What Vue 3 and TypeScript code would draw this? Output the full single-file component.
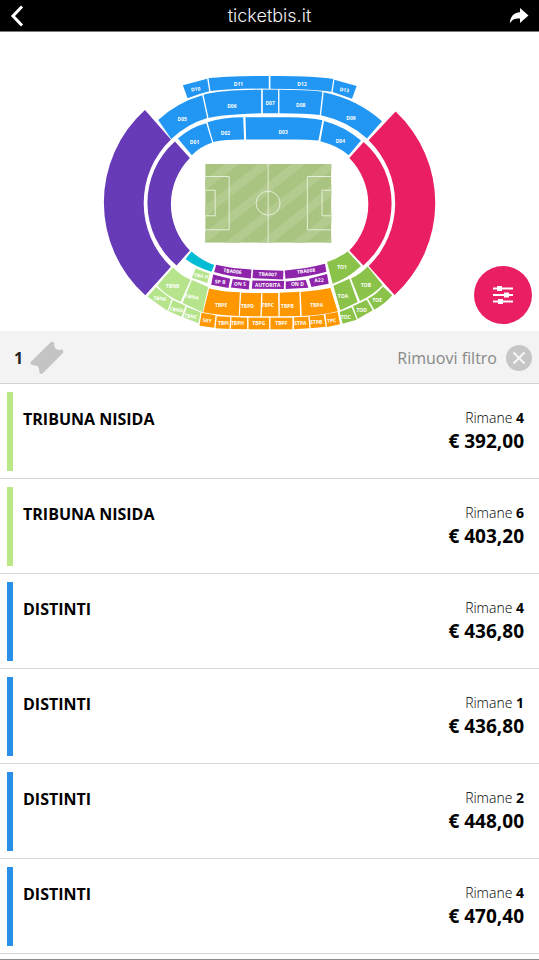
<script setup lang="ts">
interface Zone {
  d: string
  fill: string
  label?: string
  x?: number
  y?: number
  turn?: number
}

interface Offer {
  id: number
  sector: string
  left: number
  price: string
  tone: 'lime' | 'blue'
}

const VIOLET = '#673ab7'
const PINK = '#e91e63'
const BLUE = '#2196f3'
const PURPLE = '#8e24aa'
const ORANGE = '#ff9800'
const LIME = '#b5e48c'
const GREEN = '#8bc34a'
const CYAN = '#00bcd4'

const zones: Zone[] = [
  { fill: VIOLET, d: 'M135 120 L213 209 A264 264 0 0 0 213 591 L136 677 A375 375 0 0 1 135 120Z' },
  { fill: VIOLET, d: 'M225 215 L270 264 A198 198 0 0 0 270 542 L230 587 A246 246 0 0 1 225 215Z' },
  { fill: PINK, d: 'M888 125 L807 211 A264 264 0 0 1 807 589 L885 676 A375 375 0 0 0 888 125Z' },
  { fill: PINK, d: 'M792 216 L749 264 A198 198 0 0 1 749 542 L791 587 A246 246 0 0 0 792 216Z' },

  { fill: BLUE, label: 'D10', x: 287, y: 57, turn: -8, d: 'M249 46 L322 26 L328 64 Q295 72 263 85Z' },
  { fill: BLUE, label: 'D11', x: 416, y: 42, d: 'M326 25 Q380 18 507 18 L507 56 Q400 55 332 63Z' },
  { fill: BLUE, label: 'D12', x: 607, y: 42, d: 'M512 18 Q640 17 701 27 L695 65 Q630 56 512 56Z' },
  { fill: BLUE, label: 'D13', x: 734, y: 59, turn: 8, d: 'M704 29 L771 48 L757 86 L699 66Z' },
  { fill: BLUE, label: 'D05', x: 247, y: 147, d: 'M175 150 Q232 98 307 76 L322 144 Q260 163 214 207Z' },
  { fill: BLUE, label: 'D06', x: 396, y: 108, d: 'M311 74 Q365 59 484 59 L484 130 Q365 133 326 144Z' },
  { fill: BLUE, label: 'D07', x: 511, y: 100, d: 'M489 59 H535 V130 H489Z' },
  { fill: BLUE, label: 'D08', x: 603, y: 104, d: 'M539 59 Q620 59 668 65 L660 135 Q620 130 539 130Z' },
  { fill: BLUE, label: 'D09', x: 754, y: 143, d: 'M672 67 Q775 89 847 154 L802 206 Q745 154 664 136Z' },
  { fill: BLUE, label: 'D01', x: 284, y: 216, d: 'M234 206 Q272 172 319 160 L337 218 Q298 232 276 256Z' },
  { fill: BLUE, label: 'D02', x: 377, y: 188, d: 'M323 157 Q370 142 430 142 L433 209 Q375 209 340 216Z' },
  { fill: BLUE, label: 'D03', x: 550, y: 186, d: 'M437 142 H570 Q630 143 668 151 L656 212 Q620 209 590 209 H439Z' },
  { fill: BLUE, label: 'D04', x: 722, y: 212, d: 'M673 153 Q735 169 784 212 L747 256 Q715 228 662 214Z' },

  { fill: CYAN, d: 'M275 545 Q306 573 343 586 L335 606 Q290 594 257 568Z' },
  { fill: LIME, label: 'TBA H', x: 304, y: 618, turn: 8, d: 'M287 596 L330 612 L322 640 L276 624Z' },
  { fill: LIME, label: 'TBNB', x: 218, y: 648, d: 'M219 593 Q243 617 272 630 L242 696 Q202 680 172 648Z' },
  { fill: LIME, label: 'TBNA', x: 276, y: 681, turn: 8, d: 'M276 631 L325 652 L308 728 L248 700Z' },
  { fill: LIME, label: 'TBNE', x: 180, y: 686, turn: 6, d: 'M168 652 L215 689 L202 723 L143 681Z' },
  { fill: LIME, label: 'TBND', x: 230, y: 720, turn: 8, d: 'M219 691 L257 708 L245 741 L205 724Z' },
  { fill: LIME, label: 'TBNC', x: 273, y: 739, turn: 8, d: 'M261 711 L302 728 L296 761 L250 743Z' },

  { fill: PURPLE, label: 'TBA006', x: 398, y: 604, turn: 6, d: 'M349 585 Q400 597 455 599 L453 626 Q390 621 343 607Z' },
  { fill: PURPLE, label: 'TBA007', x: 504, y: 613, turn: 2, d: 'M460 600 L551 603 L550 629 L458 625Z' },
  { fill: PURPLE, label: 'TBA008', x: 619, y: 603, turn: -6, d: 'M555 602 Q620 597 676 582 L680 606 Q620 623 557 627Z' },
  { fill: PURPLE, label: 'SP B', x: 361, y: 636, turn: 4, d: 'M340 614 L391 627 L386 655 L334 645Z' },
  { fill: PURPLE, label: 'ON S', x: 420, y: 642, turn: 3, d: 'M399 628 L449 633 L447 659 L393 653Z' },
  { fill: PURPLE, label: 'AUTORITA', x: 504, y: 646, d: 'M458 632 L553 634 L552 658 L456 657Z' },
  { fill: PURPLE, label: 'ON D', x: 593, y: 642, d: 'M558 635 L618 631 L626 654 L558 658Z' },
  { fill: PURPLE, label: 'A22', x: 658, y: 631, turn: -4, d: 'M628 627 L682 613 L687 642 L635 652Z' },

  { fill: ORANGE, label: 'TBPE', x: 364, y: 705, d: 'M328 656 Q370 667 420 668 L417 739 Q360 738 310 728Z' },
  { fill: ORANGE, label: 'TBPD', x: 443, y: 708, d: 'M424 669 L484 670 L482 740 L420 739Z' },
  { fill: ORANGE, label: 'TBPC', x: 504, y: 705, d: 'M488 670 H535 L536 740 H486Z' },
  { fill: ORANGE, label: 'TBPB', x: 563, y: 708, d: 'M540 669 L599 666 L601 739 L540 740Z' },
  { fill: ORANGE, label: 'TBPA', x: 651, y: 705, d: 'M603 667 Q650 664 692 655 L714 725 Q660 738 606 739Z' },
  { fill: ORANGE, label: 'SKY', x: 322, y: 752, turn: 3, d: 'M305 729 L347 737 L343 774 L299 768Z' },
  { fill: ORANGE, label: 'TBPI', x: 371, y: 760, d: 'M351 740 L391 742 L389 778 L347 776Z' },
  { fill: ORANGE, label: 'TBPH', x: 413, y: 760, d: 'M395 742 L442 744 V779 L393 778Z' },
  { fill: ORANGE, label: 'TBPG', x: 477, y: 761, d: 'M446 744 H508 V779 H446Z' },
  { fill: ORANGE, label: 'TBPF', x: 545, y: 761, d: 'M512 744 H578 V779 H512Z' },
  { fill: ORANGE, label: 'STPA', x: 602, y: 760, d: 'M583 743 L626 741 L629 776 L583 779Z' },
  { fill: ORANGE, label: 'STPB', x: 650, y: 758, d: 'M630 740 L672 735 L678 771 L633 776Z' },
  { fill: ORANGE, label: 'TPC', x: 696, y: 752, turn: -5, d: 'M677 734 L714 727 L721 764 L682 772Z' },

  { fill: GREEN, label: 'TO1', x: 727, y: 593, d: 'M682 577 Q716 566 744 545 L784 589 Q745 626 699 642Z' },
  { fill: GREEN, label: 'TOA', x: 730, y: 679, d: 'M701 648 L749 627 L774 697 L722 722Z' },
  { fill: GREEN, label: 'TOB', x: 799, y: 646, d: 'M754 626 Q784 612 804 590 L849 646 Q820 676 781 694Z' },
  { fill: GREEN, label: 'TOE', x: 833, y: 690, d: 'M850 650 L878 677 Q855 704 824 720 L805 687 Q830 674 850 650Z' },
  { fill: GREEN, label: 'TOD', x: 786, y: 721, d: 'M801 690 L819 722 L774 748 L760 710Z' },
  { fill: GREEN, label: 'TOC', x: 738, y: 742, d: 'M756 713 L771 750 L729 762 L720 727Z' },
]

const stripes: number[] = [-340, -240, -140, -40, 60, 160, 260, 360]

const offers: Offer[] = [
  { id: 1, sector: 'TRIBUNA NISIDA', left: 4, price: '€ 392,00', tone: 'lime' },
  { id: 2, sector: 'TRIBUNA NISIDA', left: 6, price: '€ 403,20', tone: 'lime' },
  { id: 3, sector: 'DISTINTI', left: 4, price: '€ 436,80', tone: 'blue' },
  { id: 4, sector: 'DISTINTI', left: 1, price: '€ 436,80', tone: 'blue' },
  { id: 5, sector: 'DISTINTI', left: 2, price: '€ 448,00', tone: 'blue' },
  { id: 6, sector: 'DISTINTI', left: 4, price: '€ 470,40', tone: 'blue' },
]
</script>

<template>
  <div class="page">
    <header class="topbar">
      <button type="button" class="bar-button" aria-label="Indietro">
        <svg width="14" height="22" viewBox="0 0 14 22" aria-hidden="true">
          <path d="M12 1.500 L3 11 L12 20.500" fill="none" stroke="#fff" stroke-width="3" />
        </svg>
      </button>
      <h1 class="site">ticketbis.it</h1>
      <button type="button" class="bar-button" aria-label="Condividi">
        <svg width="20" height="18" viewBox="0 0 20 18" aria-hidden="true">
          <path d="M11 1 L19.500 8.500 L11 16 V11.500 C6 11.300 3 12.500 .8 16.500 C1 10 4.500 5.500 11 5.200Z" fill="#fff" />
        </svg>
      </button>
    </header>

    <main>
      <section class="map">
        <svg class="stadium" viewBox="0 0 1020 783" aria-hidden="true">
          <defs>
            <clipPath id="pitch">
              <rect x="316" y="282" width="379" height="237" />
            </clipPath>
          </defs>
          <path v-for="(zone, i) in zones" :key="i" :d="zone.d" :fill="zone.fill" />
          <g clip-path="url(#pitch)">
            <rect x="316" y="282" width="379" height="237" fill="#a9c480" />
            <path
              v-for="offset in stripes"
              :key="offset"
              :d="`M${316 + offset} 519 l300 -237 h42 l-300 237Z`"
              fill="#b3cb8f"
            />
          </g>
          <g fill="none" stroke="#e6efd9" stroke-width="3">
            <path d="M505 282 V519" />
            <circle cx="505" cy="400" r="36" />
            <path d="M316 320 H388 V480 H316 M316 361 H346 V438 H316" />
            <path d="M695 320 H623 V480 H695 M695 361 H667 V438 H695" />
          </g>
          <template v-for="(zone, i) in zones" :key="'label' + i">
            <text
              v-if="zone.label"
              class="zone-label"
              :x="zone.x"
              :y="zone.y"
              :transform="`rotate(${zone.turn ?? 0} ${zone.x} ${zone.y})`"
            >{{ zone.label }}</text>
          </template>
        </svg>
        <button type="button" class="filter-button" aria-label="Filtri">
          <svg width="22" height="20" viewBox="0 0 22 20" aria-hidden="true">
            <path d="M1 3.500 H21 M1 10 H21 M1 16.500 H21" stroke="#fff" stroke-width="2" />
            <path d="M5 1 h5 v5 h-5z M12 7.500 h5 v5 h-5z M6 14 h5 v5 h-5z" fill="#fff" />
          </svg>
        </button>
      </section>

      <section class="filters">
        <span class="count">1</span>
        <svg class="ticket" width="34" height="34" viewBox="0 0 34 34" aria-hidden="true">
          <path
            d="M20.500 1.500 Q22.500 -.3 24.300 2 Q23.500 6 26 8 Q28.500 9.500 32 8.500 Q34.500 10 32.500 12.500 L13 32 Q11 34 9.200 31.500 Q9.500 27.500 8 25.500 Q5.500 24 2 24 Q-.5 22.500 1.200 20.500Z"
            fill="#c4c4c4"
          />
        </svg>
        <button type="button" class="clear">
          Rimuovi filtro
          <svg width="26" height="26" viewBox="0 0 26 26" aria-hidden="true">
            <circle cx="13" cy="13" r="13" fill="#c6c6c6" />
            <path d="M7.500 7.500 L18.500 18.500 M18.500 7.500 L7.500 18.500" stroke="#f6f6f6" stroke-width="2" />
          </svg>
        </button>
      </section>

      <ul class="offers">
        <li v-for="offer in offers" :key="offer.id">
          <a href="#" class="offer" :class="offer.tone">
            <h2 class="sector">{{ offer.sector }}</h2>
            <div class="deal">
              <span class="left">Rimane <b>{{ offer.left }}</b></span>
              <strong class="price">{{ offer.price }}</strong>
            </div>
          </a>
        </li>
      </ul>
    </main>
  </div>
</template>

<style>
body {
  background: #fff;
}
</style>

<style scoped>
* {
  box-sizing: border-box;
}

.page {
  min-height: 100vh;
  border-bottom: 1px solid #8a8a8a;
  background: #fff;
  color: #000;
  font-family: 'Open Sans', 'Noto Sans', sans-serif;
}

button {
  border: 0;
  padding: 0;
  background: none;
  color: inherit;
  font: inherit;
  cursor: pointer;
}

svg {
  display: block;
}

.topbar {
  display: flex;
  align-items: center;
  justify-content: space-between;
  height: 32px;
  padding: 0 10px;
  border-bottom: 1px solid #777;
  background: #000;
}

.bar-button {
  display: flex;
  width: 20px;
}

.site {
  margin: 0;
  color: #f2f2f2;
  font: 300 18px/30px Inter, 'Liberation Sans', sans-serif;
}

.map {
  position: relative;
  padding-top: 38px;
}

.stadium {
  width: 63%;
  min-width: 300px;
  margin: 0 auto;
}

.zone-label {
  fill: #fff;
  font-size: 15px;
  font-weight: 700;
  text-anchor: middle;
  dominant-baseline: central;
}

.filter-button {
  position: absolute;
  right: 7px;
  bottom: 7px;
  display: flex;
  align-items: center;
  justify-content: center;
  width: 58px;
  height: 58px;
  border-radius: 50%;
  background: #e91e63;
}

.filters {
  display: flex;
  align-items: center;
  height: 53px;
  padding: 3px 7px 0 14px;
  border-bottom: 1px solid #d2d2d2;
  background: #f3f3f3;
}

.count {
  color: #222;
  font-size: 16px;
  font-weight: 700;
}

.ticket {
  margin-left: 7px;
}

.clear {
  display: flex;
  align-items: center;
  gap: 9px;
  margin-left: auto;
  color: #888;
  font-size: 16px;
}

.offers {
  margin: 0;
  padding: 0;
  list-style: none;
}

.offer {
  display: flex;
  justify-content: space-between;
  height: 95px;
  padding: 23px 15px 0 23px;
  border-bottom: 1px solid #d6d6d6;
  color: inherit;
  text-decoration: none;
  background: linear-gradient(var(--tone), var(--tone)) 7px 8px / 6px 79px no-repeat;
}

.lime {
  --tone: #b9e986;
}

.blue {
  --tone: #2990ea;
}

.sector {
  margin: 0;
  font-size: 16px;
  font-weight: 700;
  line-height: 24px;
}

.deal {
  display: flex;
  flex-direction: column;
  align-items: flex-end;
}

.left {
  font-size: 14px;
  font-weight: 300;
  line-height: 22px;
}

.left b {
  font-weight: 700;
}

.price {
  font-size: 19px;
  font-weight: 700;
  line-height: 24px;
}
</style>
